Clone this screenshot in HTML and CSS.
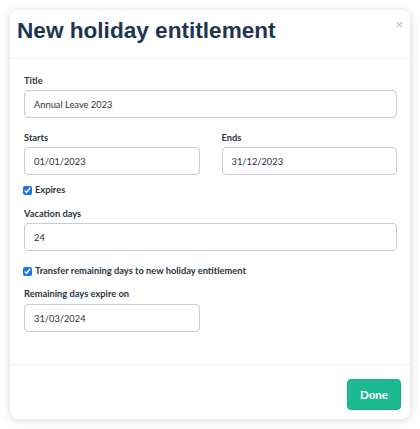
FILE: index.html
```html
<!DOCTYPE html>
<html lang="en">
<head>
  <meta charset="UTF-8">
  <title>New holiday entitlement</title>
  <link rel="stylesheet" href="styles.css">
</head>
<body>

<div class="modal">
  <div class="modal-header">
    <h2>New holiday entitlement</h2>
    <span class="close">&times;</span>
  </div>

  <div class="modal-body">
    <div class="field">
      <label>Title</label>
      <input class="full" value="Annual Leave 2023">
    </div>

    <div class="row">
      <div class="field">
        <label>Starts</label>
        <input value="01/01/2023">
      </div>
      <div class="field">
        <label>Ends</label>
        <input value="31/12/2023">
      </div>
    </div>

    <div class="check check-expires">
      <input type="checkbox" checked>
      <span>Expires</span>
    </div>

    <div class="field">
      <label>Vacation days</label>
      <input class="full" value="24">
    </div>

    <div class="check check-transfer">
      <input type="checkbox" checked>
      <span>Transfer remaining days to new holiday entitlement</span>
    </div>

    <div class="field half">
      <label>Remaining days expire on</label>
      <input value="31/03/2024">
    </div>
  </div>

  <div class="modal-footer">
    <button class="done">Done</button>
  </div>
</div>

</body>
</html>
```

FILE: styles.css
```css
body {
  margin: 0;
  padding: 10px;
  background: #fff;
  font-family: Lato, "Noto Sans", sans-serif;
  color: #2a3542;
}
.modal {
  width: 400px;
  height: 409px;
  background: #fff;
  border-radius: 8px;
  box-shadow: 0 1px 10px rgba(0, 0, 0, 0.16);
  display: flex;
  flex-direction: column;
  position: relative;
}
.modal-header {
  height: 49px;
  box-sizing: border-box;
  padding: 7px 7px 0;
  border-bottom: 1px solid #eef0f2;
}
.modal-header h2 {
  margin: 0;
  font-family: "Liberation Sans", Arial, sans-serif;
  font-size: 22.6px;
  font-weight: bold;
  line-height: 28px;
  color: #1e3552;
}
.close {
  position: absolute;
  top: 8px;
  right: 7px;
  font-family: "Liberation Sans", Arial, sans-serif;
  font-size: 13px;
  line-height: 13px;
  color: #b5b5b5;
}
.modal-body {
  flex: 1;
  padding: 16px 13px 0 14px;
}
.field {
  display: flex;
  flex-direction: column;
  margin-bottom: 14px;
}
.field label {
  font-size: 9.3px;
  font-weight: bold;
  line-height: 12px;
  margin-bottom: 3px;
}
.field input {
  height: 28px;
  box-sizing: border-box;
  border: 1px solid #c9cdd3;
  border-radius: 4px;
  padding: 0 9px;
  font-family: Lato, "Noto Sans", sans-serif;
  font-size: 9.3px;
  color: #2a3542;
  outline: none;
}
.row {
  display: flex;
  gap: 22px;
}
.row .field {
  width: 176px;
  margin-bottom: 9px;
}
.half {
  width: 176px;
}
.half label {
  margin-bottom: 4px;
}
.check {
  display: flex;
  align-items: center;
  gap: 3px;
  height: 12px;
  font-size: 9.3px;
  font-weight: bold;
  line-height: 12px;
}
.check input {
  width: 9px;
  height: 9px;
  margin: 0 0 0 -1px;
  accent-color: #1a73e8;
}
.check-expires {
  margin-bottom: 12px;
}
.check-transfer {
  margin-top: 4px;
  margin-bottom: 11px;
}
.modal-footer {
  height: 55px;
  box-sizing: border-box;
  border-top: 1px solid #eef0f2;
  padding: 14px 9px 0;
  display: flex;
  justify-content: flex-end;
  align-items: flex-start;
}
.done {
  width: 54px;
  height: 31px;
  background: #1bba92;
  border: 1px solid #17ad87;
  border-radius: 4px;
  color: #fff;
  font-family: Lato, "Noto Sans", sans-serif;
  font-size: 11.5px;
  font-weight: bold;
  padding: 0;
}
```
